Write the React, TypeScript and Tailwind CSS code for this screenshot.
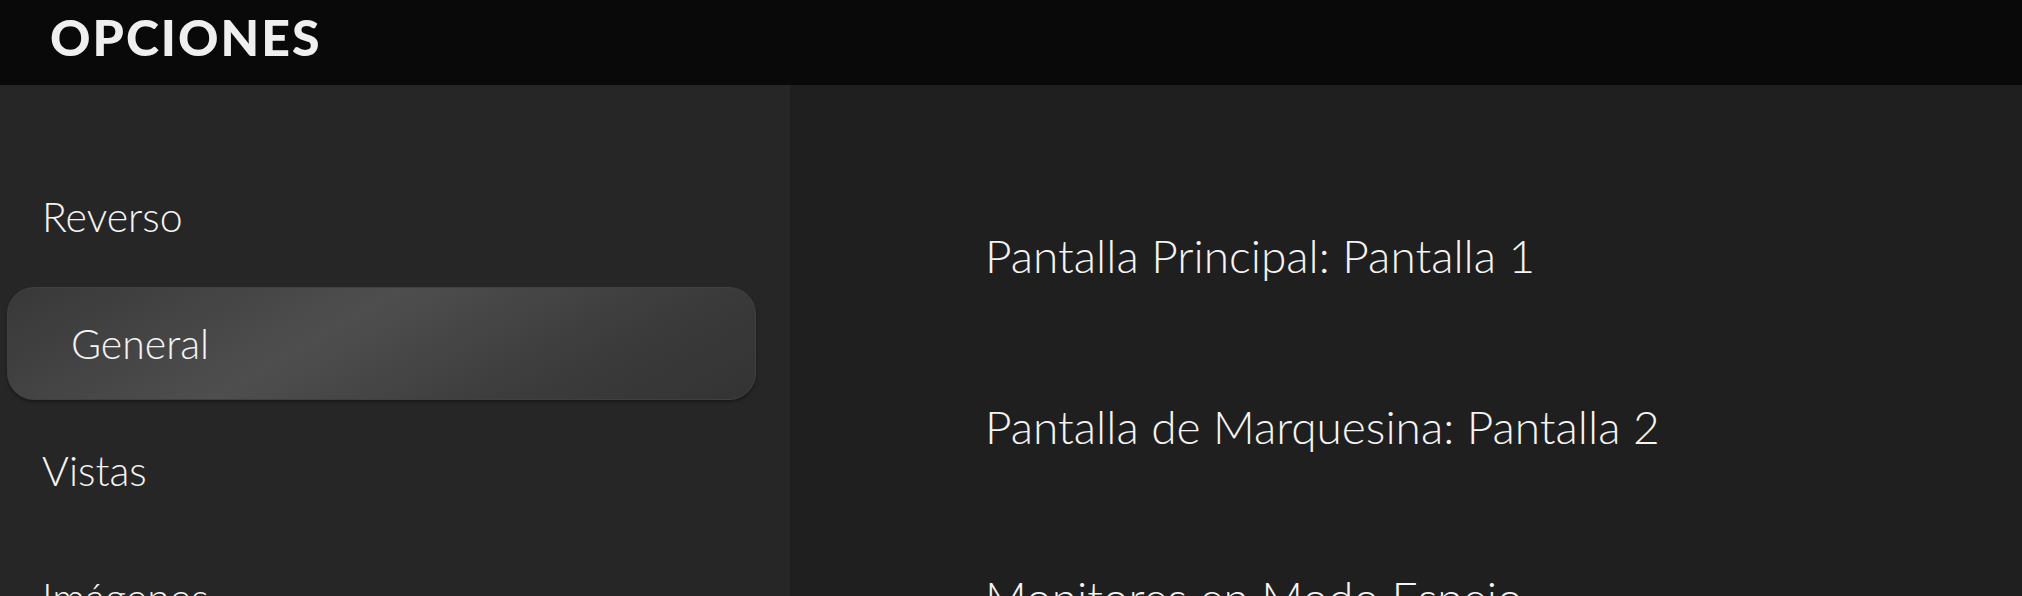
const menu = [
  { label: 'Reverso', active: false },
  { label: 'General', active: true },
  { label: 'Vistas', active: false },
  { label: 'Imágenes', active: false },
]

const settings = [
  'Pantalla Principal: Pantalla 1',
  'Pantalla de Marquesina: Pantalla 2',
  'Monitores en Modo Espejo',
]

export default function App() {
  return (
    <div className="h-[596px] w-[2022px] overflow-hidden bg-[#1f1f1f] font-['Lato',sans-serif] text-[#f4f4f4]">
      <header className="flex h-[85px] items-center bg-[#090909] pl-[50px] pb-[12px]">
        <h1 className="text-[50px] font-black leading-none tracking-[2px] text-[#efefef]">OPCIONES</h1>
      </header>

      <div className="flex h-[511px]">
        <nav className="flex w-[790px] shrink-0 flex-col gap-[14px] bg-[#262626] pl-[7px] pr-[34px] pt-[75px]">
          {menu.map(item => (
            <div
              key={item.label}
              className={
                item.active
                  ? 'flex h-[113px] shrink-0 items-center rounded-[27px] border border-[#404040] bg-[linear-gradient(150deg,#383838_0%,#4e4e4e_42%,#3b3b3b_75%,#333333_100%)] pl-[63px] shadow-[0_2px_3px_rgba(0,0,0,0.35)]'
                  : 'flex h-[113px] shrink-0 items-center pl-[35px]'
              }
            >
              <span className="text-[41px] font-light leading-none">{item.label}</span>
            </div>
          ))}
        </nav>

        <main className="flex flex-1 flex-col pl-[195px] pt-[85px]">
          {settings.map(s => (
            <div key={s} className="flex h-[171px] shrink-0 items-center">
              <span className="text-[46px] font-light leading-none">{s}</span>
            </div>
          ))}
        </main>
      </div>
    </div>
  )
}
